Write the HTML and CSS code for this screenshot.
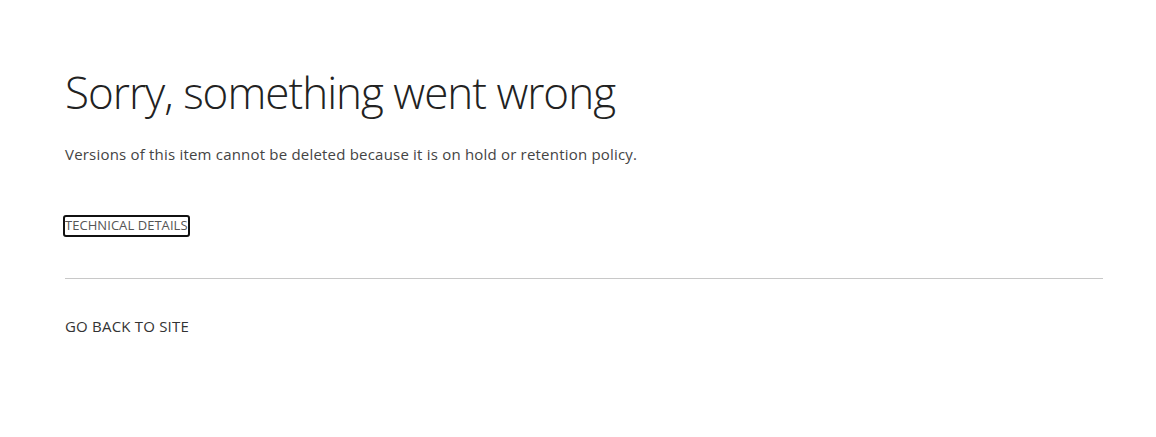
FILE: index.html
```html
<!DOCTYPE html>
<html>
<head>
<meta charset="utf-8">
<link rel="stylesheet" href="styles.css">
</head>
<body>
<main class="page">
  <h1 class="title">Sorry, something went wrong</h1>
  <p class="message">Versions of this item cannot be deleted because it is on hold or retention policy.</p>
  <div class="details-row">
    <a class="details" href="#">TECHNICAL DETAILS</a>
  </div>
  <hr class="divider">
  <a class="back" href="#">GO BACK TO SITE</a>
</main>
</body>
</html>
```
FILE: styles.css
```css
html, body {
  margin: 0;
  padding: 0;
  background: #fff;
}
body {
  font-family: "Open Sans", "Noto Sans", sans-serif;
  color: #333;
}
.page {
  padding: 62px 53px 0 65px;
  display: flex;
  flex-direction: column;
  align-items: flex-start;
}
.title {
  margin: 0;
  font-weight: 300;
  font-size: 44px;
  line-height: 60px;
  color: #222;
  letter-spacing: -1px;
}
.message {
  margin: 22px 0 0;
  font-size: 15px;
  line-height: 20px;
  color: #444;
  letter-spacing: 0.2px;
}
.details-row {
  margin-top: 49px;
}
.details {
  display: inline-block;
  font-size: 13px;
  line-height: 17px;
  padding-bottom: 1px;
  color: #555;
  text-decoration: none;
  border: 2px solid #111;
  border-radius: 3px;
  margin-left: -2px;
  letter-spacing: 0.05px;
}
.divider {
  align-self: stretch;
  margin: 41px 0 0;
  border: 0;
  border-top: 1px solid #c8c8c8;
}
.back {
  margin-top: 37px;
  font-size: 15px;
  line-height: 20px;
  color: #333;
  text-decoration: none;
  letter-spacing: 0.2px;
}
```
